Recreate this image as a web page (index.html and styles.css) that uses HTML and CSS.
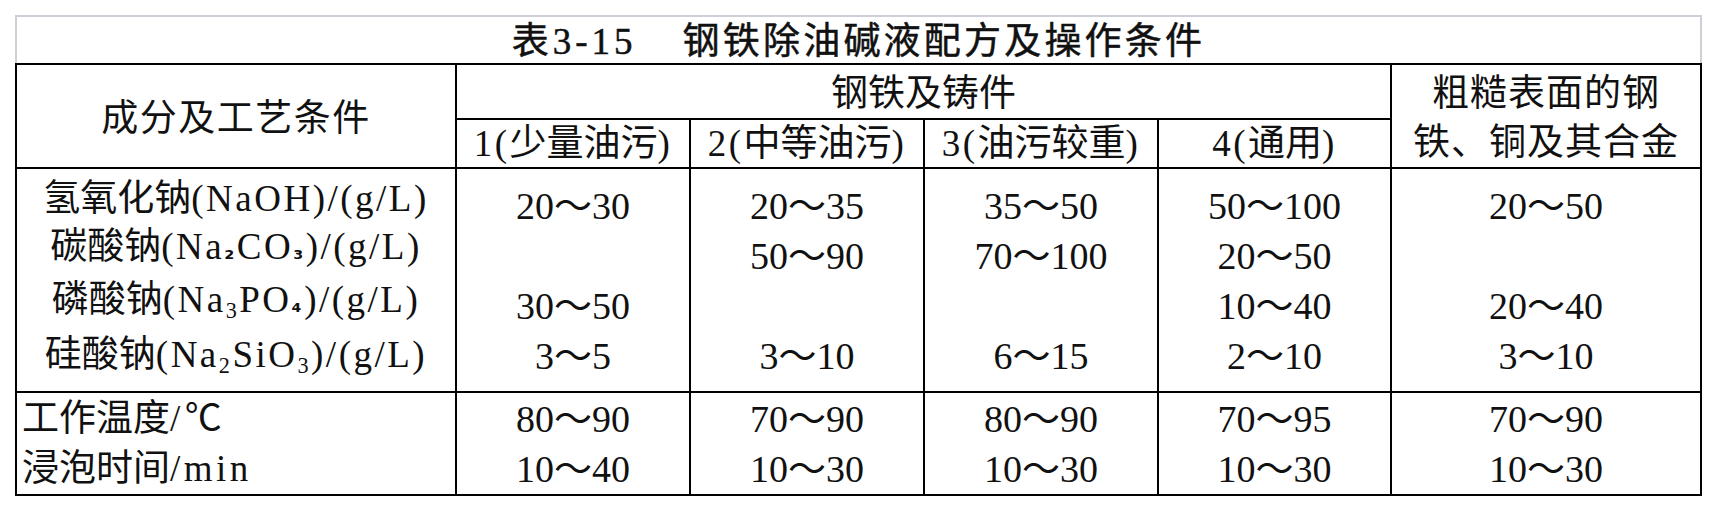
FILE: index.html
```html
<!DOCTYPE html>
<html lang="zh-CN">
<head>
<meta charset="utf-8">
<title>表3-15 钢铁除油碱液配方及操作条件</title>
<link rel="stylesheet" href="styles.css">
</head>
<body>
<div class="page">
  <div class="title"><span class="tno">表3-15</span><span class="tname">钢铁除油碱液配方及操作条件</span></div>
  <table class="spec">
    <colgroup>
      <col class="c-label">
      <col class="c-num">
      <col class="c-num">
      <col class="c-num">
      <col class="c-num4">
      <col class="c-last">
    </colgroup>
    <tr class="r-h1">
      <th rowspan="2" class="hd-main">成分及工艺条件</th>
      <th colspan="4">钢铁及铸件</th>
      <th rowspan="2" class="hd-rough">粗糙表面的钢<br>铁、铜及其合金</th>
    </tr>
    <tr class="r-h2">
      <th><span class="lat">1(</span>少量油污<span class="lat">)</span></th>
      <th><span class="lat">2(</span>中等油污<span class="lat">)</span></th>
      <th><span class="lat">3(</span>油污较重<span class="lat">)</span></th>
      <th><span class="lat">4(</span>通用<span class="lat">)</span></th>
    </tr>
    <tr class="r-body">
      <td class="labels">
        <div class="lab l1">氢氧化钠<span class="lat">(NaOH)/(g/L)</span></div>
        <div class="lab l2">碳酸钠<span class="lat">(Na<span class="usub">₂</span>CO<span class="usub">₃</span>)/(g/L)</span></div>
        <div class="lab l3">磷酸钠<span class="lat">(Na<sub>3</sub>PO<span class="usub">₄</span>)/(g/L)</span></div>
        <div class="lab l4">硅酸钠<span class="lat">(Na<sub>2</sub>SiO<sub>3</sub>)/(g/L)</span></div>
      </td>
      <td class="nums">
        <div class="ln">20～30</div>
        <div class="ln"></div>
        <div class="ln">30～50</div>
        <div class="ln">3～5</div>
      </td>
      <td class="nums">
        <div class="ln">20～35</div>
        <div class="ln">50～90</div>
        <div class="ln"></div>
        <div class="ln">3～10</div>
      </td>
      <td class="nums">
        <div class="ln">35～50</div>
        <div class="ln">70～100</div>
        <div class="ln"></div>
        <div class="ln">6～15</div>
      </td>
      <td class="nums">
        <div class="ln">50～100</div>
        <div class="ln">20～50</div>
        <div class="ln">10～40</div>
        <div class="ln">2～10</div>
      </td>
      <td class="nums">
        <div class="ln">20～50</div>
        <div class="ln"></div>
        <div class="ln">20～40</div>
        <div class="ln">3～10</div>
      </td>
    </tr>
    <tr class="r-foot">
      <td class="cond">
        <div class="fl">工作温度<span class="lat">/</span><span class="deg">℃</span></div>
        <div class="fl">浸泡时间<span class="lat wide">/min</span></div>
      </td>
      <td class="fnums"><div class="fl">80～90</div><div class="fl">10～40</div></td>
      <td class="fnums"><div class="fl">70～90</div><div class="fl">10～30</div></td>
      <td class="fnums"><div class="fl">80～90</div><div class="fl">10～30</div></td>
      <td class="fnums"><div class="fl">70～95</div><div class="fl">10～30</div></td>
      <td class="fnums"><div class="fl">70～90</div><div class="fl">10～30</div></td>
    </tr>
  </table>
</div>
</body>
</html>
```
FILE: styles.css
```css
html, body {
  margin: 0;
  padding: 0;
  background: #ffffff;
}

body {
  font-family: "Liberation Serif", "Noto Sans CJK SC", serif;
  color: #111;
}

.page {
  padding: 15px 0 0 15px;
  width: 1687px;
}

.title {
  box-sizing: border-box;
  height: 48px;
  border: 2px solid #cfcfd8;
  border-bottom: none;
  display: flex;
  justify-content: center;
  align-items: center;
  padding-top: 4px;
  font-size: 37px;
  letter-spacing: 3.2px;
  -webkit-text-stroke: 0.5px #111;
  line-height: 40px;
  white-space: nowrap;
}

.tno {
  margin-right: 46px;
  letter-spacing: 4px;
}

.spec {
  border-collapse: collapse;
  table-layout: fixed;
  width: 1687px;
  font-size: 37px;
}

.spec th,
.spec td {
  border: 2px solid #000;
  padding: 0;
  text-align: center;
  font-weight: normal;
  white-space: nowrap;
}

.c-label { width: 440px; }
.c-num { width: 234px; }
.c-num4 { width: 233px; }
.c-last { width: 310px; }

.r-h1 { height: 51px; }
.r-h2 { height: 49px; }

.r-h1 th {
  line-height: 49px;
  padding-top: 4px;
}

.r-h2 th {
  line-height: 47px;
  padding-top: 0;
}

.lat {
  letter-spacing: 2.5px;
}

.hd-main {
  vertical-align: middle;
  letter-spacing: 1.5px;
}

.hd-rough {
  line-height: 49px !important;
  letter-spacing: 1px;
}

.r-body {
  height: 224px;
}

.r-body td {
  vertical-align: top;
}

.labels {
  padding-top: 8px !important;
}

.lab {
  line-height: 48px;
}

.l1 { height: 44px; line-height: 44px; }
.l2 { height: 52px; line-height: 52px; }
.l3 { height: 53px; line-height: 53px; }
.l4 { height: 58px; line-height: 58px; }

.nums {
  padding-top: 12px !important;
  font-size: 38px;
}

.ln {
  height: 50px;
  line-height: 50px;
}

sub {
  font-size: 0.6em;
  vertical-align: -0.25em;
  line-height: 0;
}

.usub {
  font-family: "DejaVu Sans", sans-serif;
  font-weight: bold;
  font-size: 0.62em;
  line-height: 0;
}

.r-foot {
  height: 94px;
}

.r-foot td {
  vertical-align: top;
  padding-top: 1px;
}

.fnums {
  font-size: 38px;
}

.cond {
  text-align: left !important;
  padding-left: 5px !important;
}

.deg {
  display: inline-block;
  width: 1.1em;
  text-align: center;
}

.wide {
  letter-spacing: 3.5px;
}

.fl {
  height: 50px;
  line-height: 50px;
}
```
